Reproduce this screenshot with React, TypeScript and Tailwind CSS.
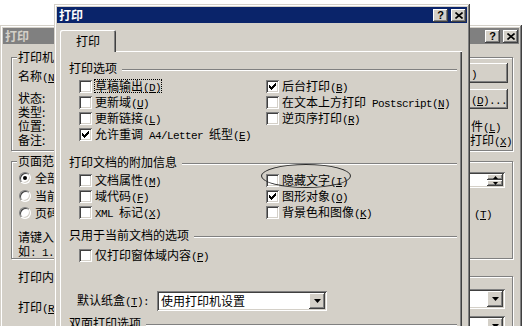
import React from "react";

const mono = "font-['Liberation_Mono',monospace] text-[11px] tracking-[-0.6px]";
const raised =
  "bg-[#d4d0c8] shadow-[inset_-1px_-1px_#404040,inset_1px_1px_#ffffff,inset_-2px_-2px_#808080,inset_2px_2px_#d4d0c8]";
const sunken =
  "bg-white shadow-[inset_1px_1px_#808080,inset_-1px_-1px_#ffffff,inset_2px_2px_#404040,inset_-2px_-2px_#d4d0c8]";
const frame =
  "bg-[#d4d0c8] p-[3px] shadow-[inset_-1px_-1px_#404040,inset_1px_1px_#d4d0c8,inset_-2px_-2px_#808080,inset_2px_2px_#ffffff]";

function Acc({ k, colon }: { k: string; colon?: boolean }) {
  return (
    <span className={mono}>
      (<span className="underline underline-offset-1">{k}</span>){colon ? ":" : ""}
    </span>
  );
}

function Check({ on }: { on?: boolean }) {
  const cols = [
    [3, 5],
    [4, 6],
    [5, 7],
    [6, 6],
    [7, 5],
    [8, 4],
    [9, 3],
  ];
  return (
    <span className={`relative block w-[13px] h-[13px] shrink-0 ${sunken}`}>
      {on && (
        <svg width="13" height="13" className="absolute left-0 top-0">
          {cols.map(([x, y]) => (
            <rect key={x} x={x} y={y} width="1" height="3" fill="#000" />
          ))}
        </svg>
      )}
    </span>
  );
}

function Radio({ on }: { on?: boolean }) {
  return (
    <span className="relative flex items-center justify-center w-[12px] h-[12px] shrink-0 rounded-full bg-white border border-t-[#808080] border-l-[#808080] border-r-white border-b-white shadow-[inset_1px_1px_#404040,inset_-1px_-1px_#d4d0c8]">
      {on && <span className="block w-[4px] h-[4px] rounded-full bg-black" />}
    </span>
  );
}

function Row({
  on,
  focus,
  children,
}: {
  on?: boolean;
  focus?: boolean;
  children: React.ReactNode;
}) {
  return (
    <div className="flex items-center h-[16px] gap-[2px]">
      <Check on={on} />
      <span
        className={`block h-[14px] leading-[12px] whitespace-pre border ${
          focus ? "border-dotted border-black" : "border-transparent"
        }`}
      >
        {children}
      </span>
    </div>
  );
}

function Head({ children }: { children: React.ReactNode }) {
  return (
    <div className="flex items-center h-[16px] pl-[9px] pr-[5px]">
      <span className="whitespace-nowrap leading-[16px]">{children}</span>
      <span className="ml-[5px] mt-[2px] flex-1 h-[1px] bg-[#808080] shadow-[0_1px_0_#ffffff]" />
    </div>
  );
}

function DropBtn() {
  return (
    <span className={`flex items-center justify-center w-[16px] h-[16px] shrink-0 ${raised}`}>
      <svg width="7" height="4">
        <polygon points="0,0 7,0 3.5,4" fill="#000" />
      </svg>
    </span>
  );
}

function Combo({ text, className = "" }: { text?: string; className?: string }) {
  return (
    <div className={`flex items-center h-[20px] p-[2px] ${sunken} ${className}`}>
      <span className="flex-1 pl-[2px] whitespace-nowrap leading-[16px]">{text}</span>
      <DropBtn />
    </div>
  );
}

function Group({
  label,
  className = "",
  children,
}: {
  label: string;
  className?: string;
  children?: React.ReactNode;
}) {
  return (
    <div
      className={`relative shrink-0 border border-[#808080] shadow-[inset_1px_1px_#ffffff,1px_1px_#ffffff] ${className}`}
    >
      <span className="absolute left-[5px] top-[-9px] h-[16px] leading-[16px] px-[1px] bg-[#d4d0c8] whitespace-nowrap">
        {label}
      </span>
      {children}
    </div>
  );
}

function TitleBar({ active }: { active?: boolean }) {
  return (
    <div
      className={`flex items-center h-[16px] pl-[2px] pr-[1px] ${
        active ? "bg-[#0a246a] text-white" : "bg-[#808080] text-[#d4d0c8]"
      }`}
    >
      <span className="flex-1 font-bold leading-[16px]">打印</span>
      <span
        className={`flex items-center justify-center w-[15px] h-[13px] text-black font-bold text-[11px] leading-none font-['Liberation_Sans',sans-serif] ${raised}`}
      >
        ?
      </span>
      <span className={`ml-[3px] flex items-center justify-center w-[15px] h-[13px] ${raised}`}>
        <svg width="8" height="7" viewBox="0 0 8 7">
          <path d="M0.5 0.5 L7.5 6.5 M7.5 0.5 L0.5 6.5" stroke="#000" strokeWidth="1.6" />
        </svg>
      </span>
    </div>
  );
}

function BackDialog() {
  return (
    <div className={`absolute left-0 top-[25px] w-[522px] h-[320px] ${frame}`}>
      <TitleBar />
      <div className="flex flex-col">
        {/* 打印机 */}
        <Group label="打印机" className="ml-[8px] mt-[13px] w-[502px] h-[94px]">
          <div className="flex justify-between h-full">
            <div className="flex flex-col pl-[6px] pt-[10px]">
              <div className="h-[16px] leading-[16px] whitespace-nowrap">
                名称<Acc k="N" colon />
              </div>
              <div className="mt-[7px] flex flex-col leading-[14px]">
                <span>状态:</span>
                <span>类型:</span>
                <span>位置:</span>
                <span>备注:</span>
              </div>
            </div>
            <div className="flex flex-col w-[108px] mr-[4px] pt-[5px]">
              <div className={`h-[20px] leading-[20px] pl-[71px] whitespace-nowrap ${raised}`}>
                <span className={mono}>)</span>
              </div>
              <div className={`mt-[6px] h-[20px] leading-[20px] pl-[71px] whitespace-nowrap ${raised}`}>
                <Acc k="D" />
                <span className={mono}>...</span>
              </div>
              <div className="mt-[11px] flex items-center h-[14px] leading-[14px] pl-[71px] whitespace-nowrap">
                <span>
                  件<Acc k="L" />
                </span>
              </div>
              <div className="flex items-center h-[14px] leading-[14px] pl-[70px] whitespace-nowrap">
                <span>
                  打印<Acc k="X" />
                </span>
              </div>
            </div>
          </div>
        </Group>

        {/* 页面范围 / 副本 */}
        <div className="flex mt-[10px] h-[98px]">
          <Group label="页面范围" className="ml-[8px] w-[251px] h-full">
            <div className="flex flex-col pt-[8px] pl-[6px]">
              <div className="flex items-center h-[16px] gap-[4px] pl-[1px]">
                <Radio on />
                <span>全部</span>
              </div>
              <div className="mt-[2px] flex items-center h-[16px] gap-[4px] pl-[1px]">
                <Radio />
                <span>当前页</span>
              </div>
              <div className="mt-[1px] flex items-center h-[16px] gap-[4px] pl-[1px]">
                <Radio />
                <span>页码范围</span>
              </div>
              <div className="mt-[9px] h-[14px] leading-[14px] whitespace-nowrap">请键入页码</div>
              <div className="h-[14px] leading-[14px] whitespace-nowrap">
                如<span className={mono}>: 1.</span>
              </div>
            </div>
          </Group>
          <Group label="副本" className="ml-[8px] w-[243px] h-full">
            <div className="flex flex-col pt-[10px]">
              <div className="flex items-center justify-end pr-[7px]">
                <div className={`flex items-center w-[100px] h-[16px] p-[2px] ${sunken}`}>
                  <span className="flex-1" />
                  <span className="flex flex-col w-[16px] h-[12px]">
                    <span className={`flex-1 flex items-center justify-center ${raised}`}>
                      <svg width="5" height="3">
                        <polygon points="2.5,0 5,3 0,3" fill="#000" />
                      </svg>
                    </span>
                    <span className={`flex-1 flex items-center justify-center ${raised}`}>
                      <svg width="5" height="3">
                        <polygon points="0,0 5,0 2.5,3" fill="#000" />
                      </svg>
                    </span>
                  </span>
                </div>
              </div>
              <div className="mt-[19px] pl-[203px] flex items-center h-[16px] whitespace-nowrap">
                <Acc k="T" />
              </div>
            </div>
          </Group>
        </div>

        {/* 打印内容 / 缩放 */}
        <div className="flex">
          <div className="w-[259px] pl-[15px] flex flex-col">
            <div className="mt-[10px] h-[16px] leading-[16px] whitespace-nowrap">打印内容</div>
            <div className="mt-[14px] h-[16px] leading-[16px] whitespace-nowrap">
              打印<Acc k="R" colon />
            </div>
          </div>
          <Group label="缩放" className="ml-[8px] mt-[17px] w-[243px] h-[70px]">
            <div className="flex flex-col items-end pt-[12px] pr-[7px]">
              <Combo className="w-[110px]" />
              <Combo className="mt-[7px] w-[110px]" />
            </div>
          </Group>
        </div>
      </div>
    </div>
  );
}

function FrontDialog() {
  return (
    <div className={`absolute left-[54px] top-[4px] w-[416px] h-[340px] ${frame}`}>
      <TitleBar active />
      <div className="pl-[3px] pt-[7px]">
        {/* tab */}
        <div className="flex">
          <div className="relative z-10 -mb-[1px] flex items-center justify-center w-[56px] h-[22px] bg-[#d4d0c8] rounded-t-[2px] shadow-[inset_1px_1px_#ffffff,inset_-1px_0_#404040,inset_-2px_0_#808080]">
            <span className="leading-[16px] pb-[1px]">打印</span>
          </div>
        </div>
        {/* panel */}
        <div className="w-[402px] h-[300px] pt-[9px] flex flex-col shadow-[inset_1px_1px_#ffffff,inset_-1px_-1px_#404040,inset_-2px_-2px_#808080]">
          <Head>打印选项</Head>
          <div className="flex mt-[2px] pl-[19px]">
            <div className="w-[187px] flex flex-col">
              <Row focus>
                草稿输出<Acc k="D" />
              </Row>
              <Row>
                更新域<Acc k="U" />
              </Row>
              <Row>
                更新链接<Acc k="L" />
              </Row>
              <Row on>
                允许重调<span className={mono}>{" A4/Letter "}</span>纸型<Acc k="E" />
              </Row>
            </div>
            <div className="flex flex-col">
              <Row on>
                后台打印<Acc k="B" />
              </Row>
              <Row>
                在文本上方打印<span className={mono}>{" Postscript"}</span>
                <Acc k="N" />
              </Row>
              <Row>
                逆页序打印<Acc k="R" />
              </Row>
            </div>
          </div>

          <div className="mt-[12px]">
            <Head>打印文档的附加信息</Head>
          </div>
          <div className="flex mt-[2px] pl-[19px]">
            <div className="w-[187px] flex flex-col">
              <Row>
                文档属性<Acc k="M" />
              </Row>
              <Row>
                域代码<Acc k="F" />
              </Row>
              <Row>
                <span className={mono}>{"XML "}</span>标记<Acc k="X" />
              </Row>
            </div>
            <div className="flex flex-col">
              <div className="relative">
                <Row>
                  隐藏文字<Acc k="I" />
                </Row>
                <span className="absolute left-[-5px] top-[-8px] w-[90px] h-[24px] rounded-[50%] border border-[#2a2a2a]" />
              </div>
              <Row on>
                图形对象<Acc k="O" />
              </Row>
              <Row>
                背景色和图像<Acc k="K" />
              </Row>
            </div>
          </div>

          <div className="mt-[7px]">
            <Head>只用于当前文档的选项</Head>
          </div>
          <div className="mt-[4px] pl-[19px]">
            <Row>
              仅打印窗体域内容<Acc k="P" />
            </Row>
          </div>

          <div className="mt-[28px] pl-[17px] flex items-center h-[20px]">
            <span className="w-[80px] whitespace-nowrap">
              默认纸盒<Acc k="T" colon />
            </span>
            <Combo text="使用打印机设置" className="w-[170px]" />
          </div>

          <div className="mt-[4px]">
            <Head>双面打印选项</Head>
          </div>
        </div>
      </div>
    </div>
  );
}

export default function App() {
  return (
    <div className="relative w-[527px] h-[326px] overflow-hidden bg-white text-black text-[12px] font-['Noto_Sans_CJK_SC',sans-serif]">
      <BackDialog />
      <FrontDialog />
    </div>
  );
}
